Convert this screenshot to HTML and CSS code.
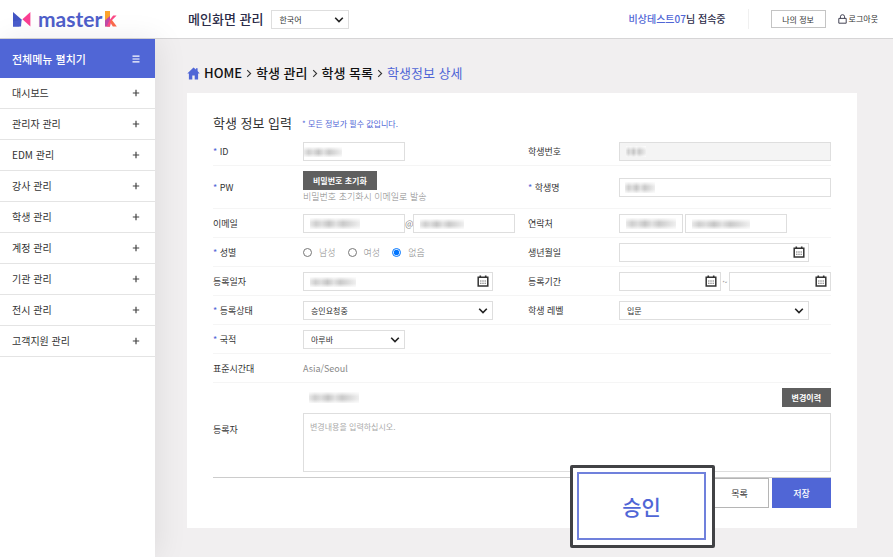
FILE: index.html
```html
<!DOCTYPE html>
<html lang="ko">
  <head>
    <meta charset="UTF-8" />
    <meta name="viewport" content="width=device-width, initial-scale=1.0" />
    <title>master k</title>
    <link rel="stylesheet" href="styles.css">
  </head>
  <body>
    <svg class="defs" aria-hidden="true">
      <symbol id="chevron" viewBox="0 0 10 8">
        <path d="M1.2 1.8 5 5.6 8.8 1.8" fill="none" stroke="#222" stroke-width="1.6" />
      </symbol>
      <symbol id="calendar" viewBox="0 0 12 12">
        <path d="M1.2 2.2h9.6v8.8H1.2z" fill="none" stroke="#333" stroke-width="1.5" />
        <path d="M3.3 0.4v2.6M8.7 0.4v2.6" stroke="#333" stroke-width="1.6" />
        <path d="M3.2 6h5.8M3.2 8.3h5.8" stroke="#555" stroke-width="1.1" stroke-dasharray="1.2 1" />
      </symbol>
      <symbol id="plus" viewBox="0 0 8 8">
        <path d="M4 0.8v6.4M0.8 4h6.4" stroke="#444" stroke-width="1.2" />
      </symbol>
      <symbol id="arrow" viewBox="0 0 6 9">
        <path d="M1.2 1.2 4.6 4.5 1.2 7.8" fill="none" stroke="#333" stroke-width="1.1" />
      </symbol>
    </svg>

    <header class="header">
      <a class="logo" href="#">
        <svg class="logo-mark" viewBox="0 0 18 15">
          <path d="M0 0 8.6 7.5 6.4 14.4H0z" fill="#4255c4" />
          <path d="M0 14.4V9.5L8.6 7.5 8 14.4z" fill="#4a5ccc" />
          <path d="M17.4 0v14.4L9.4 7.3z" fill="#fb3f93" />
        </svg>
        <span class="logo-text">master</span>
        <svg class="logo-k" viewBox="0 0 12 16">
          <path d="M0 0h5v15.4H0z" fill="#fca32d" />
          <path d="M0 9.5 5 5v10.4H0z" fill="#c04aa8" />
          <path d="M11.6 4.4 6.6 9.6 5 15.4H1.6L4.6 9 8.2 4.4z" fill="#fb4a86" />
          <path d="M6.6 8.6 11.8 15.4H7.8L5 11z" fill="#fb6a4c" />
        </svg>
      </a>
      <h1 class="header-title">메인화면 관리</h1>
      <span class="select language">
        <select aria-label="언어">
          <option>한국어</option>
        </select>
        <svg class="chevron"><use href="#chevron" /></svg>
      </span>
      <p class="user"><strong>비상테스트07</strong>님 접속중</p>
      <button class="my-info" type="button">나의 정보</button>
      <a class="logout" href="#">
        <svg class="lock" viewBox="0 0 9 10">
          <path d="M0.8 4.4h7.4v4.8H0.8zM2.4 4.4V2.8a2.1 2.1 0 0 1 4.2 0v1.6" fill="none" stroke="#445" />
        </svg>
        로그아웃
      </a>
    </header>

    <div class="layout">
      <nav class="sidebar">
        <button class="menu-toggle" type="button">
          전체메뉴 펼치기
          <svg class="icon" viewBox="0 0 8 8">
            <path d="M0.5 1.2h7M0.5 4h7M0.5 6.8h7" stroke="#fff" stroke-width="1.2" />
          </svg>
        </button>
        <ul class="menu">
          <li><a href="#">대시보드 <svg class="icon"><use href="#plus" /></svg></a></li>
          <li><a href="#">관리자 관리 <svg class="icon"><use href="#plus" /></svg></a></li>
          <li><a href="#">EDM 관리 <svg class="icon"><use href="#plus" /></svg></a></li>
          <li><a href="#">강사 관리 <svg class="icon"><use href="#plus" /></svg></a></li>
          <li><a href="#">학생 관리 <svg class="icon"><use href="#plus" /></svg></a></li>
          <li><a href="#">계정 관리 <svg class="icon"><use href="#plus" /></svg></a></li>
          <li><a href="#">기관 관리 <svg class="icon"><use href="#plus" /></svg></a></li>
          <li><a href="#">전시 관리 <svg class="icon"><use href="#plus" /></svg></a></li>
          <li><a href="#">고객지원 관리 <svg class="icon"><use href="#plus" /></svg></a></li>
        </ul>
      </nav>

      <main class="content">
        <div class="breadcrumb">
          <svg class="home" viewBox="0 0 13 13">
            <path d="M6.5 0.4 0.3 6.4h1.6v6.2h3.4V8.4h2.4v4.2h3.4V6.4h1.6L10.6 4V1.2H9v1.4z" fill="#5066d6" />
          </svg>
          <a href="#">HOME</a>
          <svg class="arrow"><use href="#arrow" /></svg>
          <a href="#">학생 관리</a>
          <svg class="arrow"><use href="#arrow" /></svg>
          <a href="#">학생 목록</a>
          <svg class="arrow"><use href="#arrow" /></svg>
          <span class="current">학생정보 상세</span>
        </div>

        <form class="panel">
          <div class="panel-head">
            <h2>학생 정보 입력</h2>
            <p>* 모든 정보가 필수 값입니다.</p>
          </div>

          <div class="row">
            <label class="required" for="userId">ID</label>
            <div class="field"><input id="userId" class="short masked mask-id" type="text" /></div>
            <label for="studentNo">학생번호</label>
            <div class="field"><input id="studentNo" class="full masked mask-no" type="text" disabled /></div>
          </div>

          <div class="row">
            <label class="required" for="resetPw">PW</label>
            <div class="field stack">
              <button id="resetPw" class="dark" type="button">비밀번호 초기화</button>
              <span class="help">비밀번호 초기화시 이메일로 발송</span>
            </div>
            <label class="required" for="studentName">학생명</label>
            <div class="field"><input id="studentName" class="full masked mask-name" type="text" /></div>
          </div>

          <div class="row">
            <label for="email">이메일</label>
            <div class="field">
              <input id="email" class="short masked mask-mail" type="text" />
              <span class="sign">@</span>
              <input class="short masked mask-domain" type="text" aria-label="이메일 도메인" />
            </div>
            <label for="phone">연락처</label>
            <div class="field phone">
              <input id="phone" class="code masked mask-code" type="text" />
              <input class="short masked mask-phone" type="text" aria-label="전화번호" />
            </div>
          </div>

          <div class="row">
            <span class="label required" id="genderLabel">성별</span>
            <div class="field radios" role="radiogroup" aria-labelledby="genderLabel">
              <label><input type="radio" name="gender" /> 남성</label>
              <label><input type="radio" name="gender" /> 여성</label>
              <label><input type="radio" name="gender" checked /> 없음</label>
            </div>
            <label for="birth">생년월일</label>
            <div class="field">
              <span class="date long"><input id="birth" type="text" /><svg><use href="#calendar" /></svg></span>
            </div>
          </div>

          <div class="row">
            <label for="regDate">등록일자</label>
            <div class="field">
              <span class="date long"><input id="regDate" class="masked mask-date" type="text" /><svg><use href="#calendar" /></svg></span>
            </div>
            <label for="periodFrom">등록기간</label>
            <div class="field">
              <span class="date short"><input id="periodFrom" type="text" /><svg><use href="#calendar" /></svg></span>
              <span class="sign">~</span>
              <span class="date short"><input type="text" aria-label="등록기간 종료" /><svg><use href="#calendar" /></svg></span>
            </div>
          </div>

          <div class="row">
            <label class="required" for="status">등록상태</label>
            <div class="field">
              <span class="select long">
                <select id="status"><option>승인요청중</option></select>
                <svg class="chevron"><use href="#chevron" /></svg>
              </span>
            </div>
            <label for="level">학생 레벨</label>
            <div class="field">
              <span class="select long">
                <select id="level"><option>입문</option></select>
                <svg class="chevron"><use href="#chevron" /></svg>
              </span>
            </div>
          </div>

          <div class="row">
            <label class="required" for="country">국적</label>
            <div class="field">
              <span class="select short">
                <select id="country"><option>아루바</option></select>
                <svg class="chevron"><use href="#chevron" /></svg>
              </span>
            </div>
          </div>

          <div class="row">
            <span class="label">표준시간대</span>
            <div class="field"><span class="value">Asia/Seoul</span></div>
          </div>

          <div class="row memo">
            <label for="memo">등록자</label>
            <div class="memo-field">
              <div class="memo-head">
                <span class="masked mask-author"></span>
                <button class="dark" type="button">변경이력</button>
              </div>
              <textarea id="memo" placeholder="변경내용을 입력하십시오."></textarea>
            </div>
          </div>

          <div class="actions">
            <div class="highlight">
              <button class="approve" type="button">승인</button>
            </div>
            <button class="list" type="button">목록</button>
            <button class="save" type="submit">저장</button>
          </div>
        </form>
      </main>
    </div>
  </body>
</html>
```
FILE: styles.css
```css
* {
  box-sizing: border-box;
}

body {
  margin: 0;
  min-height: 100vh;
  display: flex;
  flex-direction: column;
  background-color: #f1eff0;
  color: #333;
  font-family: "Noto Sans CJK KR", sans-serif;
  font-size: 9px;
  line-height: 14px;
}

h1,
h2,
p,
ul {
  margin: 0;
  padding: 0;
}

a {
  color: inherit;
  text-decoration: none;
}

button,
input,
select,
textarea {
  margin: 0;
  font-family: inherit;
  font-size: 8px;
  color: #333;
  border-radius: 0;
}

button {
  padding: 0;
  border: none;
  cursor: pointer;
}

.defs {
  position: absolute;
  width: 0;
  height: 0;
}

/* header */
.header {
  display: flex;
  align-items: center;
  height: 39px;
  padding-right: 15px;
  background-color: #fff;
  border-bottom: 1px solid #d6d5d6;
}

.logo {
  display: flex;
  align-items: center;
  width: 188px;
  padding-left: 13px;
}

.logo-mark {
  width: 18px;
  height: 15px;
}

.logo-text {
  margin: 0 3px 0 7px;
  color: #4f5fca;
  font-family: Lato, sans-serif;
  font-size: 21px;
  font-weight: bold;
  line-height: 20px;
}

.logo-k {
  width: 12px;
  height: 16px;
}

.header-title {
  margin-right: 8px;
  color: #2b2b48;
  font-size: 13px;
  font-weight: 500;
  line-height: 20px;
}

.user {
  margin-left: auto;
  padding-right: 22px;
  border-right: 1px solid #f0f0f0;
  color: #2b2b48;
  font-size: 10px;
  font-weight: 500;
  line-height: 20px;
}

.user strong {
  color: #5066d6;
  font-weight: 500;
}

.my-info {
  width: 55px;
  height: 18px;
  margin: 0 12px 0 22px;
  background-color: #fff;
  border: 1px solid #c4c4c4;
}

.logout {
  display: flex;
  align-items: center;
  gap: 2px;
  font-size: 8px;
}

.lock {
  width: 9px;
  height: 10px;
}

/* sidebar */
.layout {
  flex: 1;
  display: flex;
}

.sidebar {
  width: 155px;
  background-color: #fff;
  box-shadow: 4px 0 28px rgba(0, 0, 0, 0.08);
}

.menu-toggle,
.menu a {
  display: flex;
  align-items: center;
  justify-content: space-between;
  width: 100%;
  padding: 0 15px 0 12px;
}

.menu-toggle {
  height: 39px;
  background-color: #5066d6;
  color: #fff;
  font-size: 11px;
  font-weight: 500;
}

.menu {
  list-style: none;
}

.menu a {
  height: 31px;
  border-bottom: 1px solid #e4e4e4;
  font-size: 10px;
}

.icon {
  width: 8px;
  height: 8px;
}

/* content */
.content {
  flex: 1;
  padding: 24px 36px 30px 32px;
}

.breadcrumb {
  display: flex;
  align-items: center;
  gap: 4px;
  height: 20px;
  margin-bottom: 10px;
  color: #111;
  font-size: 13px;
  font-weight: 500;
  line-height: 20px;
}

.breadcrumb .home {
  width: 13px;
  height: 13px;
}

.breadcrumb .arrow {
  width: 6px;
  height: 9px;
}

.breadcrumb .current {
  color: #5066d6;
  font-weight: normal;
}

.panel {
  padding: 20px 26px;
  background-color: #fff;
}

.panel-head {
  display: flex;
  align-items: center;
  gap: 10px;
  height: 20px;
  margin-bottom: 4px;
}

.panel-head h2 {
  font-size: 13px;
  font-weight: normal;
  line-height: 20px;
}

.panel-head p {
  padding-top: 2px;
  color: #5066d6;
  font-size: 8px;
}

.row {
  display: grid;
  grid-template-columns: 90px minmax(0, 225fr) 91px minmax(0, 212fr);
  align-items: center;
  padding: 5px 0 4px;
  border-bottom: 1px solid #f5f5f5;
}

.required::before {
  content: "* ";
  color: #5066d6;
}

.field {
  display: flex;
  align-items: center;
  min-height: 19px;
}

.stack {
  flex-direction: column;
  align-items: flex-start;
}

.dark {
  height: 19px;
  padding: 0 10px;
  background-color: #5f5f5f;
  color: #fff;
  font-weight: bold;
}

.help,
.value,
.sign,
.radios label {
  color: #888;
}

.help,
.radios label {
  font-weight: 300;
}

.sign {
  width: 8px;
  text-align: center;
}

input[type="text"],
select {
  width: 100%;
  height: 19px;
  padding: 0 7px;
  background-color: #fff;
  border: 1px solid #dedede;
}

input[type="text"]:disabled {
  background-color: #f4f4f4;
}

.field .short {
  width: 102px;
}

.field .code {
  width: 64px;
}

.field .long {
  width: 190px;
}

.phone {
  gap: 2px;
}

.select,
.date {
  position: relative;
  display: flex;
}

.select select {
  appearance: none;
}

.language {
  width: 78px;
}

.chevron {
  position: absolute;
  right: 5px;
  top: 6px;
  width: 10px;
  height: 8px;
  pointer-events: none;
}

.date svg {
  position: absolute;
  right: 4px;
  top: 3px;
  width: 12px;
  height: 12px;
}

.radios {
  gap: 12px;
}

.radios label {
  display: flex;
  align-items: center;
  gap: 7px;
}

.radios input {
  width: 9px;
  height: 9px;
  margin: 0;
}

/* personal data is covered with a mosaic */
.masked {
  background-image:
    linear-gradient(rgba(255, 255, 255, 0.9), rgba(255, 255, 255, 0) 40%, rgba(255, 255, 255, 0) 65%, rgba(255, 255, 255, 0.8)),
    linear-gradient(90deg, #e9e9e9, #cfcfcf 12%, #dedede 24%, #c6c6c6 38%, #e2e2e2 52%, #cacaca 66%, #d9d9d9 80%, #efefef);
  background-repeat: no-repeat;
  background-position: 6px center;
  background-size: 50px 11px;
}

.masked.mask-id {
  background-position: 0 center;
  background-size: 38px 10px;
}

.masked.mask-no {
  background-size: 20px 11px;
}

.masked.mask-name {
  background-position: 5px center;
  background-size: 30px 11px;
}

.masked.mask-domain {
  background-size: 44px 10px;
}

.masked.mask-phone {
  background-size: 58px 10px;
}

.masked.mask-date {
  background-size: 46px 10px;
}

.mask-author {
  width: 60px;
  height: 12px;
}

.memo {
  grid-template-columns: 90px 1fr;
  padding-bottom: 5px;
  border-bottom-color: #ccc;
}

.memo-head {
  display: flex;
  align-items: center;
  justify-content: space-between;
  margin-bottom: 6px;
}

textarea {
  display: block;
  width: 100%;
  height: 59px;
  padding: 6px;
  border: 1px solid #dedede;
  line-height: 14px;
  resize: none;
}

textarea::placeholder {
  color: #aaa;
}

.actions {
  position: relative;
  display: flex;
  justify-content: flex-end;
  gap: 3px;
}

.list,
.save {
  width: 59px;
  height: 30px;
  font-size: 9px;
}

.list {
  background-color: #fff;
  border: 1px solid #b5b5b5;
}

.save {
  background-color: #5066d6;
  color: #fff;
  font-weight: 500;
}

/* enlarged approve button lies over the form and the panel edge */
.highlight {
  position: absolute;
  right: 116px;
  top: -13px;
  width: 145px;
  height: 83px;
  padding: 4px 6px 5px 4px;
  background-color: #fff;
  border: 3px solid #414245;
  border-radius: 2px;
}

.approve {
  width: 100%;
  height: 100%;
  background-color: #fff;
  border: 2px solid #7081dc;
  color: #5066d6;
  font-size: 21px;
  font-weight: 500;
}
```
